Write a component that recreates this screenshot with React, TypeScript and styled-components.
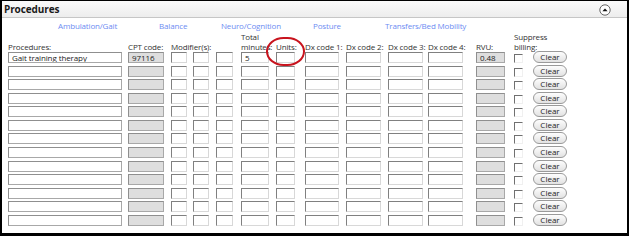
import React from "react";
import styled, { createGlobalStyle } from "styled-components";

interface Col {
    key: string;
    track: number;
    width: number;
    kind: "text" | "gray" | "check" | "clear";
    label?: string;
    label2?: string;
}

const columns: Col[] = [
    { key: "proc", track: 120, width: 114, kind: "text", label: "Procedures:" },
    { key: "cpt", track: 43, width: 36, kind: "gray", label: "CPT code:" },
    { key: "mod1", track: 22, width: 16, kind: "text", label: "Modifier(s):" },
    { key: "mod2", track: 23, width: 16, kind: "text" },
    { key: "mod3", track: 25, width: 17, kind: "text" },
    { key: "min", track: 35, width: 28, kind: "text", label: "Total", label2: "minutes:" },
    { key: "units", track: 29, width: 19, kind: "text", label: "Units:" },
    { key: "dx1", track: 41, width: 34, kind: "text", label: "Dx code 1:" },
    { key: "dx2", track: 42, width: 35, kind: "text", label: "Dx code 2:" },
    { key: "dx3", track: 40, width: 35, kind: "text", label: "Dx code 3:" },
    { key: "dx4", track: 48, width: 35, kind: "text", label: "Dx code 4:" },
    { key: "rvu", track: 38, width: 29, kind: "gray", label: "RVU:" },
    { key: "chk", track: 19, width: 9, kind: "check", label: "Suppress", label2: "billing:" },
    { key: "clear", track: 40, width: 34, kind: "clear" },
];

const firstRow: Record<string, string> = {
    proc: "Gait training therapy",
    cpt: "97116",
    min: "5",
    rvu: "0.48",
};

const categories = [
    { name: "Ambulation/Gait", w: 101 },
    { name: "Balance", w: 62 },
    { name: "Neuro/Cognition", w: 92 },
    { name: "Posture", w: 72 },
    { name: "Transfers/Bed Mobility", w: 0 },
];

const ROWS = 13;

export default function App() {
    return (
        <>
            <GlobalStyle />
            <Frame>
                <Header>
                    <HeaderTitle>Procedures</HeaderTitle>
                    <CollapseIcon viewBox="0 0 12 12">
                        <circle cx="6" cy="6" r="5.2" fill="#fff" stroke="#555" strokeWidth="0.9" />
                        <path d="M3.4 7.2 L6 4.4 L8.6 7.2 Z" fill="#111" />
                    </CollapseIcon>
                </Header>
                <Body>
                    <Categories $tracks={categories.map((c) => (c.w ? `${c.w}px` : "auto")).join(" ")}>
                        {categories.map((c) => (
                            <Category key={c.name}>{c.name}</Category>
                        ))}
                    </Categories>
                    <Grid $tracks={columns.map((c) => `${c.track}px`).join(" ")}>
                        {columns.map((c) => (
                            <Label key={`l-${c.key}`}>
                                {c.label}
                                {c.label2 && (
                                    <>
                                        <br />
                                        {c.label2}
                                    </>
                                )}
                            </Label>
                        ))}
                        {Array.from({ length: ROWS }).map((_, r) =>
                            columns.map((c) => {
                                const id = `${r}-${c.key}`;
                                if (c.kind === "check") return <Check key={id} />;
                                if (c.kind === "clear") return <ClearButton key={id}>Clear</ClearButton>;
                                return (
                                    <Field key={id} $w={c.width} $gray={c.kind === "gray"} $solid={c.key === "proc"}>
                                        {r === 0 ? firstRow[c.key] : ""}
                                    </Field>
                                );
                            })
                        )}
                    </Grid>
                    <Annotation />
                </Body>
            </Frame>
        </>
    );
}

const GlobalStyle = createGlobalStyle`
    body {
        margin: 0;
        background: #fff;
        font-family: "Open Sans", "Liberation Sans", sans-serif;
    }
`;

const Frame = styled.div`
    width: 629px;
    height: 236px;
    box-sizing: border-box;
    border-style: solid;
    border-color: #000;
    border-width: 1px 2px 3px 2px;
    background: #fff;
    display: flex;
    flex-direction: column;
`;

const Header = styled.div`
    height: 17px;
    box-sizing: border-box;
    border-bottom: 1px solid #c6c6c6;
    background: linear-gradient(to bottom, #fafafa, #ededed);
    display: flex;
    align-items: center;
    justify-content: space-between;
    padding: 0 16px 0 2px;
`;

const HeaderTitle = styled.span`
    font-family: "Open Sans", "Liberation Sans", sans-serif;
    font-weight: 700;
    font-size: 10px;
    color: #1a1a1a;
    letter-spacing: -0.1px;
`;

const CollapseIcon = styled.svg`
    width: 12px;
    height: 12px;
    margin-top: 2px;
`;

const Body = styled.div`
    position: relative;
    flex: 1;
    padding: 3px 0 0 6px;
`;

const Categories = styled.div<{ $tracks: string }>`
    display: grid;
    grid-template-columns: ${(p) => p.$tracks};
    padding-left: 50px;
    height: 10px;
    align-items: center;
`;

const Category = styled.span`
    font-size: 8px;
    line-height: 10px;
    color: #6d8cf2;
    white-space: nowrap;
    letter-spacing: -0.15px;
`;

const Grid = styled.div<{ $tracks: string }>`
    display: grid;
    grid-template-columns: ${(p) => p.$tracks};
    grid-template-rows: 21px repeat(${ROWS}, 13.58px);
`;

const Label = styled.div`
    align-self: end;
    padding-bottom: 1px;
    font-size: 8px;
    line-height: 9.5px;
    color: #333;
    white-space: nowrap;
    letter-spacing: -0.15px;
`;

const Field = styled.div<{ $w: number; $gray: boolean; $solid: boolean }>`
    width: ${(p) => p.$w}px;
    height: 11px;
    box-sizing: border-box;
    border: 1px solid;
    border-color: ${(p) =>
        p.$gray || p.$solid ? "#8f8f8f #a8a8a8 #a8a8a8 #8f8f8f" : "#808080 #d8d8d8 #d8d8d8 #808080"};
    background: ${(p) => (p.$gray ? "#dedede" : "#fff")};
    font-size: 8px;
    line-height: 9px;
    padding-left: 3px;
    color: #222;
    white-space: nowrap;
    overflow: hidden;
    letter-spacing: -0.1px;
`;

const Check = styled.span`
    width: 9px;
    height: 9px;
    margin-top: 2px;
    box-sizing: border-box;
    border-style: solid;
    border-width: 1px;
    border-color: #707070 #f0f0f0 #f0f0f0 #707070;
    background: #fff;
`;

const ClearButton = styled.button`
    width: 34px;
    height: 12px;
    margin-top: -1px;
    padding: 0;
    box-sizing: border-box;
    border: 1px solid #9a9a9a;
    border-radius: 6px;
    background: linear-gradient(to bottom, #fdfdfd, #e2e2e2);
    font-family: "Open Sans", "Liberation Sans", sans-serif;
    font-size: 8px;
    line-height: 10px;
    color: #1e1e1e;
`;

const Annotation = styled.div`
    position: absolute;
    left: 264px;
    top: 19px;
    width: 39px;
    height: 29px;
    box-sizing: border-box;
    border: 2px solid #c8141e;
    border-radius: 45% / 50%;
    pointer-events: none;
`;
